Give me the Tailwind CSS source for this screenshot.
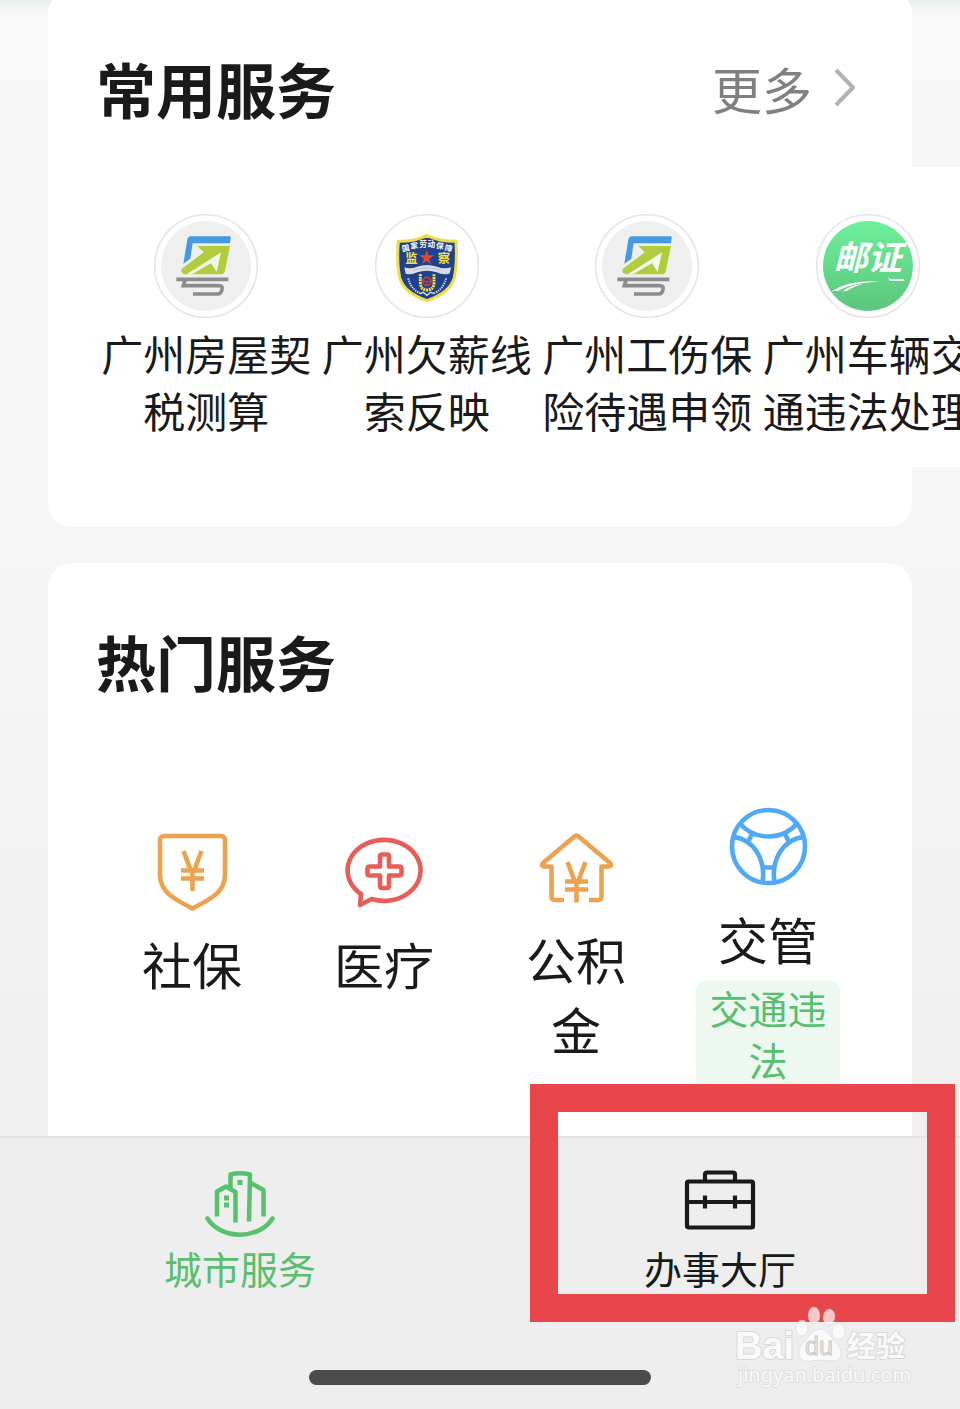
<!DOCTYPE html>
<html lang="zh-CN">
<head>
    <meta charset="UTF-8">
    <meta name="viewport" content="width=device-width, initial-scale=1.0">
    <title>城市服务</title>
    <script src="https://cdn.jsdelivr.net/npm/@tailwindcss/browser@4"></script>
</head>
<body class="h-screen flex flex-col overflow-hidden text-[#1a1a1a] font-['Noto_Sans_CJK_SC',sans-serif]">

    <main class="relative flex-1 min-h-0 overflow-hidden px-12 bg-linear-to-b from-[#f8f8f8] via-[#f6f6f6] to-[#efefef]">
        <div class="absolute inset-x-0 top-0 h-3 bg-linear-to-b from-[#e5f0eb] to-[#f8f8f8]"></div>

        <!-- Common services -->
        <section class="relative -mt-[10px] pt-14 pb-[60px] px-12 bg-white rounded-3xl">
            <div class="flex items-center justify-between">
                <h2 class="text-[60px] leading-[84px] font-bold">常用服务</h2>
                <a href="#" class="flex items-center gap-[22px] pr-2 text-[50px] leading-[84px] text-[#808080]">更多
                    <svg class="w-[22px] h-10" viewBox="0 0 22 40" fill="none" stroke="#b2b2b2" stroke-width="4" stroke-linejoin="round"><path d="M2 2 19 19.500 2 37"/></svg>
                </a>
            </div>

            <div class="mt-[37px] w-[882px] grid grid-cols-4 pt-[47px] pb-[29px] bg-white text-[42px] leading-[57px] text-center">
                <a href="#" class="flex flex-col items-center gap-[6px]">
                    <svg class="size-[104px]" viewBox="42 42 312 312">
                        <circle cx="198" cy="198" r="154" fill="#fff" stroke="#e6e6e6" stroke-width="5"/>
                        <circle cx="198" cy="198" r="135" fill="#efefef"/>
                        <path fill="#459be3" d="M130 191 142 119q2-10 12-10H268q5 0 4 5L270 130H158L151 176Z"/>
                        <path fill="#afcd3c" d="M172 138H270L255 212q-3 11-14 11H136q-16-3-11-16L191 157Z"/>
                        <path fill="#f6f8ee" d="M243 157 230 216 213 190 156 223H140Z"/>
                        <g fill="none" stroke="#8c8c8c" stroke-width="11">
                            <path d="M109 238H265"/>
                            <path d="M135 241 130 257H236q13 0 10 11l-1 4q-3 10-12 10H159"/>
                        </g>
                    </svg>
                    <span>广州房屋契<br>税测算</span>
                </a>
                <a href="#" class="flex flex-col items-center gap-[6px]">
                    <svg class="size-[104px]" viewBox="39 42 312 312">
                        <circle cx="195" cy="198" r="154" fill="#fff" stroke="#e6e6e6" stroke-width="5"/>
                        <path fill="#20418b" stroke="#f0dd45" stroke-width="9" stroke-linejoin="round" d="M195 106Q230 124 282 124 286 190 277 232 266 277 195 302 124 277 113 232 104 190 109 124 160 124 195 106Z"/>
                        <g fill="#fff" font-size="23" font-weight="700" text-anchor="middle">
                            <text x="133" y="153" transform="rotate(-12 133 153)">国</text>
                            <text x="158" y="146" transform="rotate(-7 158 146)">家</text>
                            <text x="183" y="141">劳</text>
                            <text x="208" y="141">动</text>
                            <text x="233" y="146" transform="rotate(7 233 146)">保</text>
                            <text x="258" y="153" transform="rotate(12 258 153)">障</text>
                        </g>
                        <g fill="#f5e53c" font-size="37" font-weight="700" text-anchor="middle">
                            <text x="148" y="190">监</text>
                            <text x="246" y="190">察</text>
                        </g>
                        <path fill="#e2492c" d="M194 149 199 166H216L202 176 207 192 194 182 180 192 186 176 171 166H189Z"/>
                        <path fill="#d9dce6" d="M127 202Q147 208 165 200 195 190 225 200 245 208 268 202L262 221Q242 226 224 217 195 207 166 217 147 226 131 221Z"/>
                        <path fill="none" stroke="#92a3ca" stroke-width="2" stroke-dasharray="5 2" d="M155 210Q195 198 237 211"/>
                        <path fill="none" stroke="#f0dd45" stroke-width="9" stroke-dasharray="6 2" d="M175 222V250Q177 270 195 270 214 270 216 250V222"/>
                        <circle cx="195" cy="244" r="12" fill="none" stroke="#d43a36" stroke-width="5"/>
                        <path stroke="#d43a36" stroke-width="4" d="M184 244H206M195 244V255"/>
                        <path fill="none" stroke="#d9dce6" stroke-width="6" stroke-dasharray="4 3" d="M139 235Q145 265 174 280M252 235Q246 265 217 280"/>
                        <path fill="none" stroke="#d9dce6" stroke-width="4" d="M174 281 184 277 195 286 206 277 217 281"/>
                    </svg>
                    <span>广州欠薪线<br>索反映</span>
                </a>
                <a href="#" class="flex flex-col items-center gap-[6px]">
                    <svg class="size-[104px]" viewBox="42 42 312 312">
                        <circle cx="198" cy="198" r="154" fill="#fff" stroke="#e6e6e6" stroke-width="5"/>
                        <circle cx="198" cy="198" r="135" fill="#efefef"/>
                        <path fill="#459be3" d="M130 191 142 119q2-10 12-10H268q5 0 4 5L270 130H158L151 176Z"/>
                        <path fill="#afcd3c" d="M172 138H270L255 212q-3 11-14 11H136q-16-3-11-16L191 157Z"/>
                        <path fill="#f6f8ee" d="M243 157 230 216 213 190 156 223H140Z"/>
                        <g fill="none" stroke="#8c8c8c" stroke-width="11">
                            <path d="M109 238H265"/>
                            <path d="M135 241 130 257H236q13 0 10 11l-1 4q-3 10-12 10H159"/>
                        </g>
                    </svg>
                    <span>广州工伤保<br>险待遇申领</span>
                </a>
                <a href="#" class="flex flex-col items-center gap-[6px]">
                    <svg class="size-[104px]" viewBox="48 42 312 312">
                        <defs>
                            <linearGradient id="mint" x1="0" y1="0" x2="0" y2="1">
                                <stop offset="0" stop-color="#6df09b"/>
                                <stop offset="1" stop-color="#5cc57d"/>
                            </linearGradient>
                        </defs>
                        <circle cx="204" cy="198" r="154" fill="#fff" stroke="#e6e6e6" stroke-width="5"/>
                        <circle cx="204" cy="198" r="135" fill="url(#mint)"/>
                        <text x="203" y="211" fill="#fff" font-size="102" font-weight="700" font-style="italic" text-anchor="middle">邮证</text>
                        <path fill="#fff" d="M95 274Q150 237 243 245 160 247 115 272ZM128 274Q150 255 190 251 160 259 140 273ZM263 232 273 238H311L314 243H270Z"/>
                    </svg>
                    <span>广州车辆交<br>通违法处理</span>
                </a>
            </div>
        </section>

        <!-- Hot services -->
        <section class="mt-9 pt-14 pb-[60px] px-12 bg-white rounded-3xl">
            <h2 class="text-[60px] leading-[84px] font-bold">热门服务</h2>

            <div class="grid grid-cols-4 items-start mt-1 text-[50px] leading-[70px] text-center">
                <a href="#" class="flex flex-col items-center gap-2 px-6 pt-[117px]">
                    <svg class="size-24" viewBox="0 0 96 96" fill="none" stroke="#eca24f" stroke-width="4.600">
                        <path stroke-linejoin="round" d="M20 12H77a4 4 0 0 1 4 4V51C81 68 67 75 48.500 84.500 30 75 16 68 16 51V16a4 4 0 0 1 4-4Z"/>
                        <path d="M39.500 27 47 47M57.500 27 50 47M37 46.500H60M37 54.500H60M48.500 46V67"/>
                    </svg>
                    <span>社保</span>
                </a>
                <a href="#" class="flex flex-col items-center gap-2 px-6 pt-[117px]">
                    <svg class="size-24" viewBox="0 0 96 96" fill="none" stroke="#e75e59" stroke-width="4.600" stroke-linejoin="round">
                        <path d="M35.500 75A36.500 30.500 0 1 0 25 70L24 81Z"/>
                        <path d="M44 32.500q0-2 2-2h5q2 0 2 2v10H63q2.500 0 2.500 2v5q0 2-2.500 2H53v10q0 2.500-2 2.500h-5q-2 0-2-2.500v-10H34q-2.500 0-2.500-2v-5q0-2 2.500-2H44Z"/>
                    </svg>
                    <span>医疗</span>
                </a>
                <a href="#" class="flex flex-col items-center gap-2 px-6 pt-[112px]">
                    <svg class="size-24" viewBox="0 0 96 96" fill="none" stroke="#eca24f" stroke-width="4.600">
                        <path stroke-linejoin="round" d="M36 81H27q-3.500 0-3.500-3.500V47.500H16q-3.500-.500-1-3.500L47 17q1.500-1 3 0L82 44q2.500 3-1 3.500H73.500V77.500q0 3.500-3.500 3.500H61"/>
                        <path d="M39.500 43 47 63M57.500 43 50 63M37 62.500H60M37 70.500H60M48.500 62V83.500"/>
                    </svg>
                    <span>公积金</span>
                </a>
                <a href="#" class="flex flex-col items-center px-6 pt-[92px]">
                    <svg class="size-24 mb-2" viewBox="0 0 96 96" fill="none" stroke="#4fa9f7" stroke-width="4.600">
                        <circle cx="48.500" cy="47.500" r="36.500"/>
                        <path d="M20 24.500Q31 37.500 48.500 37.500 66 37.500 77 24.500M13 38C34 40 46 61 42.500 83M84 38C63 40 51 61 54.500 83M32.500 34 28 43M64.500 34 69 43M43 68.500H54"/>
                    </svg>
                    <span>交管</span>
                    <span class="mt-[7px] pt-px px-3 pb-3 rounded-xl bg-[#edf8f1] text-[39px] leading-[52px] text-[#57bf6d]">交通违法</span>
                </a>
            </div>
        </section>
    </main>

    <!-- Bottom tabs -->
    <nav class="relative pt-[29px] pb-6 border-t-2 border-[#e3e3e3] bg-[#eeeeee] text-[38px] leading-[54px] text-center">
        <div class="grid grid-cols-2">
            <a href="#" class="flex flex-col items-center gap-[2px] text-[#57bf6d]">
                <svg class="size-[72px]" viewBox="0 0 72 72" fill="none" stroke="#57c16c" stroke-width="4.500" stroke-linejoin="round">
                    <path stroke-linecap="round" d="M3.500 51.500C17 73 55 73 68.500 51.500"/>
                    <path d="M13 49.500V24.500L22 19.500 31.500 25V55.500M26.500 22V7.500Q36 5 46 7.500L45 54.500M46 15.500 59.500 23V49.500"/>
                    <path fill="#57c16c" stroke="none" d="M33.500 13h5v5h-5zM20 28.500h5v5h-5zM20 35.500h5v5h-5z"/>
                </svg>
                <span>城市服务</span>
            </a>
            <a href="#" class="flex flex-col items-center gap-[2px]">
                <svg class="size-[72px]" viewBox="0 0 72 72" fill="none" stroke="#1a1a1a" stroke-width="4.200">
                    <rect x="3" y="14.500" width="66" height="46" rx="1.500"/>
                    <path stroke-linejoin="round" d="M21 14V7.500q0-2 2-2H49q2 0 2 2V14"/>
                    <path d="M3 35H69M21 28.500V41.500M51 28.500V41.500"/>
                </svg>
                <span>办事大厅</span>
            </a>
        </div>
        <div class="mt-[75px] mx-auto w-[342px] h-[15px] rounded-full bg-[#4b4b4b]"></div>

        <!-- Highlight frame -->
        <div class="absolute right-[5px] bottom-[87px] w-[425px] h-[238px] border-28 border-[#e8464a]"></div>

        <!-- Watermark -->
        <svg class="absolute right-0 bottom-0 w-60 h-[119px]" viewBox="0 0 240 119">
            <g fill="#fff" fill-opacity=".7" stroke="#b8b8b8" stroke-opacity=".35" stroke-width=".8">
                <ellipse cx="82" cy="38" rx="6" ry="8"/>
                <ellipse cx="94" cy="25.500" rx="6" ry="8.500"/>
                <ellipse cx="109" cy="27" rx="6" ry="8" transform="rotate(8 109 27)"/>
                <ellipse cx="118.500" cy="41.500" rx="6.500" ry="8"/>
                <path d="M100 39c8 0 10 8 16 14 9 9 5 19-5 18-7-1-15-1-22 0-11 1-13-11-6-18 7-6 9-14 17-14Z"/>
            </g>
            <g fill="#fafafa" stroke="#cfcfcf" stroke-opacity=".7" stroke-width="2" stroke-linejoin="round" paint-order="stroke">
                <text x="15" y="69" font-size="38" font-weight="700" font-family="Liberation Sans, sans-serif">Bai</text>
                <text x="127" y="67" font-size="29" font-weight="700">经验</text>
                <text x="18" y="92" font-size="20" font-family="Noto Sans, sans-serif" stroke-opacity=".5">jingyan.baidu.com</text>
            </g>
            <text x="85" y="65" font-size="25" font-family="Liberation Sans, sans-serif" fill="#ededed" stroke="#c8c8c8" stroke-width="1">du</text>
        </svg>
    </nav>

</body>
</html>
